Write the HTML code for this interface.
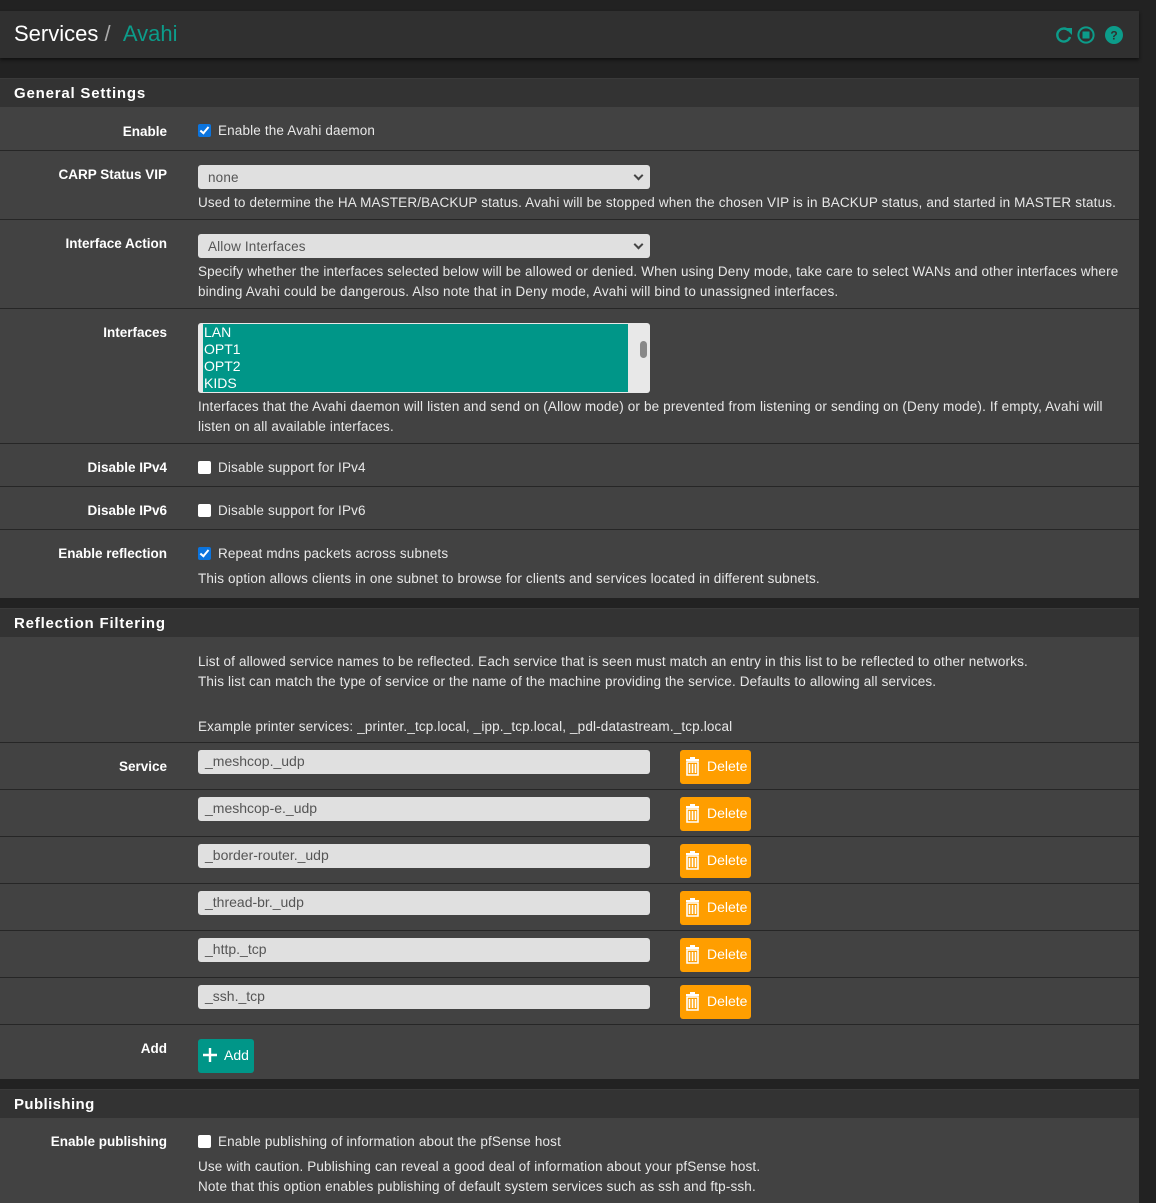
<!DOCTYPE html>
<html><head><meta charset="utf-8"><style>
*{box-sizing:border-box;margin:0;padding:0}
body{width:1156px;height:1203px;background:#222;font-family:"Liberation Sans",sans-serif;color:#e8e8e8;position:relative;overflow:hidden;font-size:13.5px}
.a{position:absolute}
.hdr{left:0;top:11px;width:1139px;height:47px;background:#303030;box-shadow:0 2px 3px #111}
.ph{left:0;width:1139px;height:30px;background:#333;border-top:1px solid #3a3a3a;border-bottom:1px solid #222;font-weight:bold;font-size:15px;letter-spacing:.8px;padding:6px 0 0 14px;color:#fff}
.row{left:0;width:1139px;background:#424242;border-bottom:1px solid #262626}
.lbl{position:absolute;right:972px;font-weight:bold;font-size:13.5px;color:#fff;white-space:nowrap}
.c{position:absolute;left:198px;white-space:nowrap;line-height:20px;letter-spacing:.15px}
.sel{position:absolute;left:198px;width:452px;height:24px;background:#e0e0e0;border-radius:3px;color:#555;padding:5px 10px 0;font-size:13.5px;letter-spacing:.15px}
.sel:after{content:"";position:absolute;right:8px;top:7px;width:5px;height:5px;border-right:2px solid #444;border-bottom:2px solid #444;transform:rotate(45deg)}
.inp{position:absolute;left:198px;width:452px;height:24px;background:#e0e0e0;border-radius:3px;color:#555;padding:3px 7px 0;font-size:14px}
.cb{display:inline-block;width:13px;height:13px;background:#fff;border-radius:2px;vertical-align:-2px;margin-right:7px;position:relative}
.cb.on{background:#0b74de}
.cb.on:after{content:"";position:absolute;left:4px;top:1px;width:3px;height:7px;border-right:2px solid #fff;border-bottom:2px solid #fff;transform:rotate(40deg)}
.del{position:absolute;left:680px;width:71px;height:34px;background:#ff9e00;border-radius:3px;color:#fff;font-size:14px;padding:8px 0 0 27px}
.del i{position:absolute;left:6px;top:7px;width:13px;height:19px}
</style></head><body>
<div class="a hdr"><span class="a" style="left:14px;top:10px;font-size:22px;color:#fff">Services <span style="color:#aaa">/</span> &nbsp;<span style="color:#0c9c8a">Avahi</span></span>
<svg class="a" style="left:1055px;top:14px" width="70" height="20" viewBox="0 0 70 20"><path d="M13.5 5.5A6.5 6.5 0 1 0 15 12" fill="none" stroke="#0c9c8a" stroke-width="2.4"/><path d="M10 3h7v7z" fill="#0c9c8a"/><circle cx="31" cy="10" r="7.6" fill="none" stroke="#0c9c8a" stroke-width="2"/><rect x="27.5" y="6.5" width="7" height="7" fill="#0c9c8a"/><circle cx="59" cy="10" r="9" fill="#0c9c8a"/><text x="59" y="14.5" font-size="12" font-weight="bold" fill="#303030" text-anchor="middle" font-family="Liberation Sans">?</text></svg></div>

<div class="a ph" style="top:78px">General Settings</div>
<div class="a row" style="top:107px;height:44px"><span class="lbl" style="top:17px">Enable</span><span class="c" style="top:14px"><span class="cb on"></span>Enable the Avahi daemon</span></div>
<div class="a row" style="top:151px;height:69px"><span class="lbl" style="top:16px">CARP Status VIP</span><div class="sel" style="top:14px">none</div><span class="c" style="top:42px">Used to determine the HA MASTER/BACKUP status. Avahi will be stopped when the chosen VIP is in BACKUP status, and started in MASTER status.</span></div>
<div class="a row" style="top:220px;height:89px"><span class="lbl" style="top:16px">Interface Action</span><div class="sel" style="top:14px">Allow Interfaces</div><span class="c" style="top:42px">Specify whether the interfaces selected below will be allowed or denied. When using Deny mode, take care to select WANs and other interfaces where<br>binding Avahi could be dangerous. Also note that in Deny mode, Avahi will bind to unassigned interfaces.</span></div>
<div class="a row" style="top:309px;height:135px"><span class="lbl" style="top:16px">Interfaces</span>
<div class="a" style="left:198px;top:14px;width:452px;height:70px;background:#e8e8e8;border-radius:3px;padding:1px 22px 1px 6px"><div style="background:#009688;height:68px;margin-left:-1px;color:#fff;font-size:14px;line-height:17px;padding-left:1px">LAN<br>OPT1<br>OPT2<br>KIDS</div><div class="a" style="right:3px;top:18px;width:7px;height:17px;background:#888;border-radius:4px"></div></div>
<span class="c" style="top:88px">Interfaces that the Avahi daemon will listen and send on (Allow mode) or be prevented from listening or sending on (Deny mode). If empty, Avahi will<br>listen on all available interfaces.</span></div>
<div class="a row" style="top:444px;height:43px"><span class="lbl" style="top:16px">Disable IPv4</span><span class="c" style="top:14px"><span class="cb"></span>Disable support for IPv4</span></div>
<div class="a row" style="top:487px;height:43px"><span class="lbl" style="top:16px">Disable IPv6</span><span class="c" style="top:14px"><span class="cb"></span>Disable support for IPv6</span></div>
<div class="a row" style="top:530px;height:68px;border-bottom:none"><span class="lbl" style="top:16px">Enable reflection</span><span class="c" style="top:14px"><span class="cb on"></span>Repeat mdns packets across subnets</span><span class="c" style="top:39px">This option allows clients in one subnet to browse for clients and services located in different subnets.</span></div>

<div class="a ph" style="top:608px">Reflection Filtering</div>
<div class="a row" style="top:637px;height:106px"><span class="c" style="top:15px">List of allowed service names to be reflected. Each service that is seen must match an entry in this list to be reflected to other networks.<br>This list can match the type of service or the name of the machine providing the service. Defaults to allowing all services.</span><span class="c" style="top:80px">Example printer services: _printer._tcp.local, _ipp._tcp.local, _pdl-datastream._tcp.local</span></div>

<div class="a row" style="top:743px;height:47px"><span class="lbl" style="top:16px">Service</span><div class="inp" style="top:7px">_meshcop._udp</div><div class="del" style="top:7px"><i><svg width="13" height="19"><rect x="0" y="2" width="13" height="2" fill="#fff"/><rect x="4" y="0" width="5" height="3" fill="#fff"/><path d="M1 5h11v13H1z M3.5 7v9 M6.5 7v9 M9.5 7v9" fill="none" stroke="#fff" stroke-width="1.6"/></svg></i>Delete</div></div>
<div class="a row" style="top:790px;height:47px"><div class="inp" style="top:7px">_meshcop-e._udp</div><div class="del" style="top:7px"><i><svg width="13" height="19"><rect x="0" y="2" width="13" height="2" fill="#fff"/><rect x="4" y="0" width="5" height="3" fill="#fff"/><path d="M1 5h11v13H1z M3.5 7v9 M6.5 7v9 M9.5 7v9" fill="none" stroke="#fff" stroke-width="1.6"/></svg></i>Delete</div></div>
<div class="a row" style="top:837px;height:47px"><div class="inp" style="top:7px">_border-router._udp</div><div class="del" style="top:7px"><i><svg width="13" height="19"><rect x="0" y="2" width="13" height="2" fill="#fff"/><rect x="4" y="0" width="5" height="3" fill="#fff"/><path d="M1 5h11v13H1z M3.5 7v9 M6.5 7v9 M9.5 7v9" fill="none" stroke="#fff" stroke-width="1.6"/></svg></i>Delete</div></div>
<div class="a row" style="top:884px;height:47px"><div class="inp" style="top:7px">_thread-br._udp</div><div class="del" style="top:7px"><i><svg width="13" height="19"><rect x="0" y="2" width="13" height="2" fill="#fff"/><rect x="4" y="0" width="5" height="3" fill="#fff"/><path d="M1 5h11v13H1z M3.5 7v9 M6.5 7v9 M9.5 7v9" fill="none" stroke="#fff" stroke-width="1.6"/></svg></i>Delete</div></div>
<div class="a row" style="top:931px;height:47px"><div class="inp" style="top:7px">_http._tcp</div><div class="del" style="top:7px"><i><svg width="13" height="19"><rect x="0" y="2" width="13" height="2" fill="#fff"/><rect x="4" y="0" width="5" height="3" fill="#fff"/><path d="M1 5h11v13H1z M3.5 7v9 M6.5 7v9 M9.5 7v9" fill="none" stroke="#fff" stroke-width="1.6"/></svg></i>Delete</div></div>
<div class="a row" style="top:978px;height:47px"><div class="inp" style="top:7px">_ssh._tcp</div><div class="del" style="top:7px"><i><svg width="13" height="19"><rect x="0" y="2" width="13" height="2" fill="#fff"/><rect x="4" y="0" width="5" height="3" fill="#fff"/><path d="M1 5h11v13H1z M3.5 7v9 M6.5 7v9 M9.5 7v9" fill="none" stroke="#fff" stroke-width="1.6"/></svg></i>Delete</div></div>
<div class="a row" style="top:1025px;height:54px;border-bottom:none"><span class="lbl" style="top:16px">Add</span><div class="a" style="left:198px;top:14px;width:56px;height:34px;background:#009688;border-radius:3px;color:#fff;font-size:14px;padding:8px 0 0 26px"><svg class="a" style="left:5px;top:9px" width="14" height="14"><path d="M7 0v14M0 7h14" stroke="#fff" stroke-width="2.4"/></svg>Add</div></div>

<div class="a ph" style="top:1089px;letter-spacing:.4px">Publishing</div>
<div class="a row" style="top:1118px;height:85px;border-bottom:none"><span class="lbl" style="top:16px">Enable publishing</span><span class="c" style="top:14px"><span class="cb"></span>Enable publishing of information about the pfSense host</span><span class="c" style="top:39px">Use with caution. Publishing can reveal a good deal of information about your pfSense host.<br>Note that this option enables publishing of default system services such as ssh and ftp-ssh.</span></div>
</body></html>
